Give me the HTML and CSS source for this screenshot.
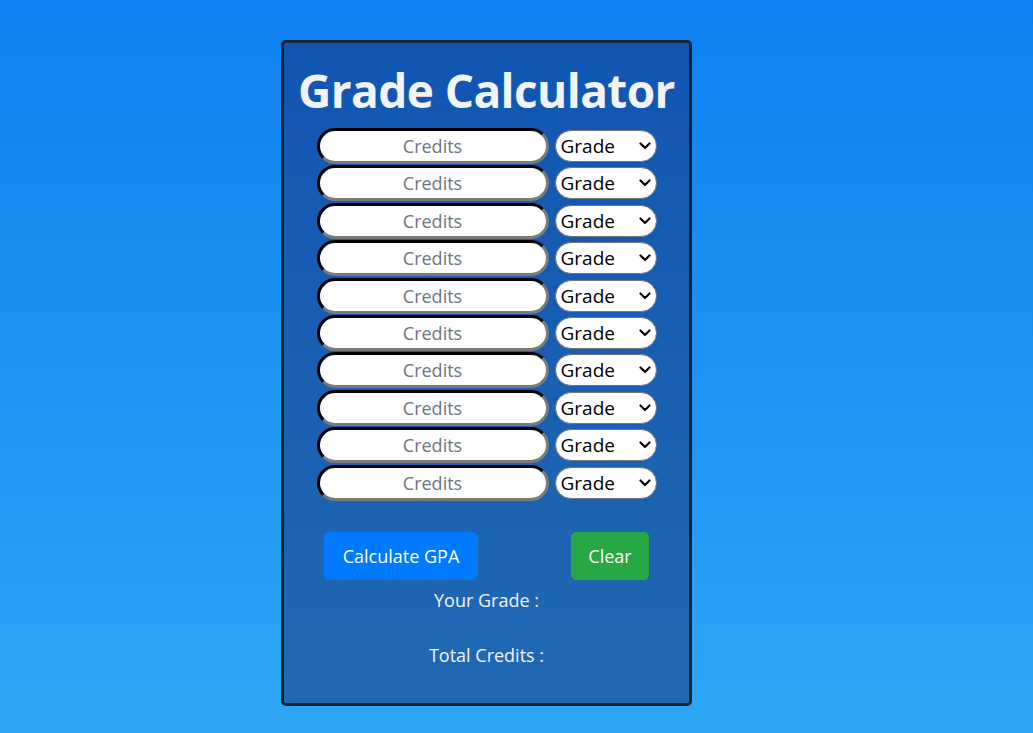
FILE: index.html
```html
<!DOCTYPE html>
<html lang="en">
<head>
<meta charset="utf-8">
<title>Grade Calculator</title>
<link rel="stylesheet" href="styles.css">
</head>
<body>
<main class="page">
  <section class="card">
    <h1 class="title">Grade Calculator</h1>
    <div class="rows">
      <div class="row"><input class="credits" type="text" placeholder="Credits"><select class="grade"><option>Grade</option></select></div>
      <div class="row"><input class="credits" type="text" placeholder="Credits"><select class="grade"><option>Grade</option></select></div>
      <div class="row"><input class="credits" type="text" placeholder="Credits"><select class="grade"><option>Grade</option></select></div>
      <div class="row"><input class="credits" type="text" placeholder="Credits"><select class="grade"><option>Grade</option></select></div>
      <div class="row"><input class="credits" type="text" placeholder="Credits"><select class="grade"><option>Grade</option></select></div>
      <div class="row"><input class="credits" type="text" placeholder="Credits"><select class="grade"><option>Grade</option></select></div>
      <div class="row"><input class="credits" type="text" placeholder="Credits"><select class="grade"><option>Grade</option></select></div>
      <div class="row"><input class="credits" type="text" placeholder="Credits"><select class="grade"><option>Grade</option></select></div>
      <div class="row"><input class="credits" type="text" placeholder="Credits"><select class="grade"><option>Grade</option></select></div>
      <div class="row"><input class="credits" type="text" placeholder="Credits"><select class="grade"><option>Grade</option></select></div>
    </div>
    <div class="actions">
      <button class="btn btn-primary" type="button">Calculate GPA</button>
      <button class="btn btn-success" type="button">Clear</button>
    </div>
    <p class="result">Your Grade :</p>
    <p class="result result-total">Total Credits :</p>
  </section>
</main>
</body>
</html>
```

FILE: styles.css
```css
html, body {
  margin: 0;
  padding: 0;
}
body {
  min-height: 733px;
  background: linear-gradient(180deg, #0f7ff1 0%, #2ea7f6 100%);
  font-family: "Open Sans", "Noto Sans", sans-serif;
  color: #f1f3f5;
}
.page {
  padding: 40px 0 0 281px;
}
.card {
  box-sizing: border-box;
  width: 411px;
  height: 666px;
  border: 3px solid #1b2330;
  border-radius: 5px;
  background: linear-gradient(180deg, #1155b3 0%, #2069b1 100%);
  display: flex;
  flex-direction: column;
  align-items: center;
}
.title {
  margin: 14px 0 0;
  font-size: 46px;
  font-weight: 700;
  line-height: 66px;
  color: #f1f3f5;
  letter-spacing: -0.6px;
  white-space: nowrap;
}
.rows {
  margin-top: 5px;
  display: flex;
  flex-direction: column;
  gap: 1.4px;
}
.row {
  display: flex;
  align-items: center;
  gap: 6px;
  height: 36px;
}
.credits {
  box-sizing: border-box;
  width: 232px;
  height: 36px;
  border: 3px inset #767676;
  border-top-color: #1d1d1d;
  border-left-color: #1d1d1d;
  border-right-color: #7a7a7a;
  border-bottom-color: #7a7a7a;
  border-radius: 18px;
  background: #fff;
  text-align: center;
  font-family: "Open Sans", "Noto Sans", sans-serif;
  font-size: 18px;
  padding: 0 10px;
  outline: none;
}
.credits::placeholder {
  color: #6c757d;
}
.grade {
  box-sizing: border-box;
  width: 102px;
  height: 32px;
  border: 1px solid #767676;
  border-radius: 16px;
  background-color: #fff;
  background-image: url("data:image/svg+xml,%3Csvg xmlns='http://www.w3.org/2000/svg' width='12' height='8' viewBox='0 0 12 8'%3E%3Cpath d='M1.5 1.5 L6 6 L10.5 1.5' fill='none' stroke='%23000' stroke-width='2.2' stroke-linecap='round' stroke-linejoin='round'/%3E%3C/svg%3E");
  background-repeat: no-repeat;
  background-position: right 5px center;
  background-size: 12px 8px;
  -webkit-appearance: none;
  appearance: none;
  color: #000;
  font-family: "Open Sans", "Noto Sans", sans-serif;
  font-size: 19px;
  padding: 0 0 0 5px;
  outline: none;
}
.actions {
  margin-top: 31px;
  width: 325px;
  display: flex;
  justify-content: space-between;
}
.btn {
  box-sizing: border-box;
  height: 48px;
  border: 1px solid transparent;
  border-radius: 5px;
  padding: 0 15px;
  font-family: "Open Sans", "Noto Sans", sans-serif;
  font-size: 18px;
  color: #fff;
  white-space: nowrap;
}
.btn-primary {
  background: #007bff;
  border-color: #007bff;
  width: 154px;
}
.btn-success {
  background: #28a745;
  border-color: #28a745;
  width: 78px;
}
.result {
  margin: 6px 0 0;
  font-size: 18px;
  line-height: 28px;
  color: #f1f3f5;
}
.result-total {
  margin-top: 27px;
}
```
